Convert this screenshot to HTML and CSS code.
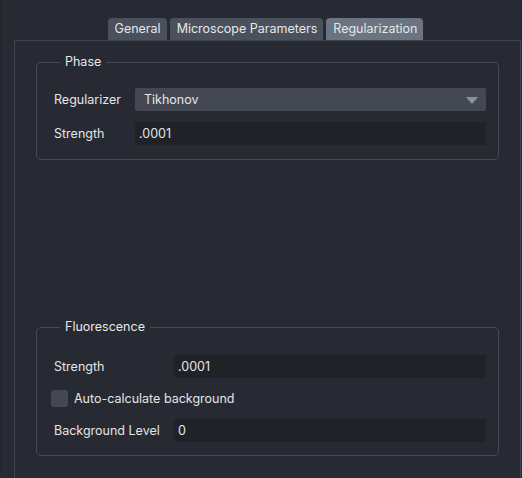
FILE: index.html
```html
<!DOCTYPE html>
<html>
<head>
<meta charset="utf-8">
<link rel="stylesheet" href="styles.css">
</head>
<body>
<div class="window">
  <div class="tabbar">
    <div class="tab">General</div>
    <div class="tab">Microscope Parameters</div>
    <div class="tab active">Regularization</div>
  </div>
  <div class="pane">
    <fieldset class="group phase">
      <legend>Phase</legend>
      <div class="rows">
        <div class="row">
          <span class="label w-phase">Regularizer</span>
          <div class="combo">
            <span>Tikhonov</span>
            <svg class="arrow" width="12" height="7" viewBox="0 0 12 7"><path d="M0 0 H12 L6 7 Z" fill="#8c9199"/></svg>
          </div>
        </div>
        <div class="row">
          <span class="label w-phase">Strength</span>
          <div class="input">.0001</div>
        </div>
      </div>
    </fieldset>
    <div class="spacer"></div>
    <fieldset class="group fluo">
      <legend>Fluorescence</legend>
      <div class="rows">
        <div class="row">
          <span class="label w-fluo">Strength</span>
          <div class="input">.0001</div>
        </div>
        <div class="row check-row">
          <span class="checkbox"></span>
          <span class="check-label">Auto-calculate background</span>
        </div>
        <div class="row">
          <span class="label w-fluo">Background Level</span>
          <div class="input">0</div>
        </div>
      </div>
    </fieldset>
  </div>
</div>
</body>
</html>
```
FILE: styles.css
```css
html, body {
  margin: 0;
  padding: 0;
  background: #272a32;
  height: 100%;
  overflow: hidden;
}
body {
  font-family: Inter, "Noto Sans", "Liberation Sans", sans-serif;
  font-size: 12.5px;
  color: #e4e5e7;
}
.window {
  padding: 18px 1px 0 13px;
  border-left: 1px solid #23262d;
  height: 100%;
  box-sizing: border-box;
}
.tabbar {
  display: flex;
  justify-content: center;
  gap: 3px;
  height: 22px;
  padding-right: 4px;
}
.tab {
  background: #4a515c;
  border-radius: 4px 4px 0 0;
  padding: 0 6px 0 7px;
  line-height: 22px;
  color: #e6e7e9;
}
.tab.active {
  background: #6b7480;
}
.pane {
  border: 1px solid #3e434d;
  border-bottom: none;
  height: 600px;
  padding: 14px 21px 0 21px;
  box-sizing: border-box;
}
.group {
  margin: 0;
  border: 1px solid #464b56;
  border-radius: 5px;
  padding: 0 12px 0 14px;
}
.group legend {
  padding: 0 5px;
  margin-left: 9px;
  line-height: 14px;
  color: #e6e7e9;
}
.phase {
  padding-bottom: 14px;
}
.fluo {
  padding-bottom: 13px;
}
.rows {
  display: flex;
  flex-direction: column;
  gap: 11px;
  margin-top: 19px;
}
.fluo .rows {
  margin-top: 21px;
  gap: 12px;
}
.row {
  display: flex;
  align-items: center;
  height: 23px;
}
.label {
  padding-left: 3px;
  flex: none;
}
.w-phase { width: 81px; }
.w-fluo { width: 120px; }
.combo {
  flex: 1;
  height: 23px;
  background: #434852;
  border-radius: 2px;
  display: flex;
  align-items: center;
  justify-content: space-between;
  padding: 0 8px 0 9px;
}
.arrow {
  flex: none;
  margin-top: 1px;
}
.input {
  flex: 1;
  height: 23px;
  line-height: 23px;
  background: #202227;
  border-radius: 2px;
  padding-left: 4px;
}
.check-row {
  height: 17px;
  margin: 0;
}
.checkbox {
  width: 17px;
  height: 17px;
  background: #434852;
  border-radius: 3px;
  flex: none;
}
.check-label {
  margin-left: 6px;
}
.spacer {
  height: 160px;
}
```
